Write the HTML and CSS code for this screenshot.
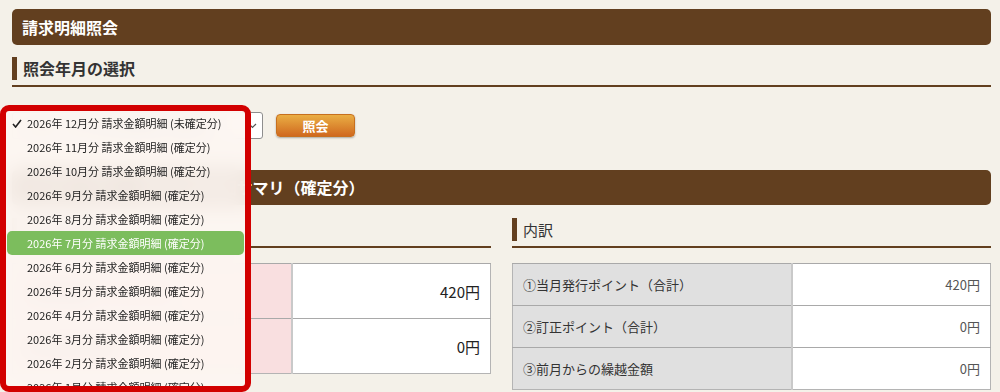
FILE: index.html
```html
<!DOCTYPE html>
<html lang="ja">
<head>
    <meta charset="UTF-8">
    <meta name="viewport" content="width=device-width, initial-scale=1.0">
    <title>請求明細照会</title>
    <link rel="stylesheet" href="styles.css">
</head>
<body>
    <div class="page">
        <h1 class="bar">請求明細照会</h1>

        <h2 class="sub"><span>照会年月の選択</span></h2>

        <div class="picker">
            <div class="select">
                <span class="select-text">2026年 12月分 請求金額明細 (未確定分)</span>
                <svg class="chevron" width="9" height="6" viewBox="0 0 9 6">
                    <polyline points="1,1 4.5,4.5 8,1" fill="none" stroke="#555" stroke-width="1.2"/>
                </svg>
            </div>
            <button class="btn-query">照会</button>
        </div>

        <h1 class="bar bar-summary">2026年 7月分 ご請求金額明細サマリ（確定分）</h1>

        <div class="columns">
            <div class="col">
                <h2 class="sub sub-light"><span>ご請求金額</span></h2>
                <table class="summary">
                    <tr>
                        <th>ご請求金額（①＋②＋③）</th>
                        <td>420円</td>
                    </tr>
                    <tr>
                        <th>お支払済み金額</th>
                        <td>0円</td>
                    </tr>
                </table>
            </div>

            <div class="col">
                <h2 class="sub sub-light"><span>内訳</span></h2>
                <table class="detail">
                    <tr>
                        <th>①当月発行ポイント（合計）</th>
                        <td>420円</td>
                    </tr>
                    <tr>
                        <th>②訂正ポイント（合計）</th>
                        <td>0円</td>
                    </tr>
                    <tr>
                        <th>③前月からの繰越金額</th>
                        <td>0円</td>
                    </tr>
                </table>
            </div>
        </div>
    </div>

    <!-- 年月選択のプルダウン（展開中） -->
    <div class="popup">
        <ul class="options">
            <li>
                <span class="mark"><svg width="10" height="9" viewBox="0 0 10 9"><polyline points="1,5 3.6,8 9,1" fill="none" stroke="#222" stroke-width="1.6"/></svg></span>
                <span class="label">2026年 12月分 請求金額明細 (未確定分)</span>
            </li>
            <li><span class="mark"></span><span class="label">2026年 11月分 請求金額明細 (確定分)</span></li>
            <li><span class="mark"></span><span class="label">2026年 10月分 請求金額明細 (確定分)</span></li>
            <li><span class="mark"></span><span class="label">2026年 9月分 請求金額明細 (確定分)</span></li>
            <li><span class="mark"></span><span class="label">2026年 8月分 請求金額明細 (確定分)</span></li>
            <li class="active"><span class="mark"></span><span class="label">2026年 7月分 請求金額明細 (確定分)</span></li>
            <li><span class="mark"></span><span class="label">2026年 6月分 請求金額明細 (確定分)</span></li>
            <li><span class="mark"></span><span class="label">2026年 5月分 請求金額明細 (確定分)</span></li>
            <li><span class="mark"></span><span class="label">2026年 4月分 請求金額明細 (確定分)</span></li>
            <li><span class="mark"></span><span class="label">2026年 3月分 請求金額明細 (確定分)</span></li>
            <li><span class="mark"></span><span class="label">2026年 2月分 請求金額明細 (確定分)</span></li>
            <li><span class="mark"></span><span class="label">2026年 1月分 請求金額明細 (確定分)</span></li>
        </ul>
    </div>
</body>
</html>
```

FILE: styles.css
```css
body {
    margin: 0;
    background-color: #f4f1e9;
    color: #333;
    font-family: "Noto Sans CJK JP", "Noto Sans", sans-serif;
}

.page {
    padding: 9px 9px 0 12px;
}

/* 茶色の見出しバー */
.bar {
    margin: 0;
    height: 36px;
    padding: 0 10px;
    background-color: #623f1f;
    border-radius: 5px;
    color: #fff;
    font-size: 16px;
    font-weight: bold;
    line-height: 36px;
}

.bar-summary {
    margin-top: 31px;
    height: 35px;
    line-height: 35px;
}

/* 左線付きの小見出し */
.sub {
    margin: 12px 0 0;
    padding-bottom: 5px;
    border-bottom: 2px solid #623f1f;
    font-size: 16px;
    font-weight: bold;
}

.sub span {
    display: block;
    border-left: 5px solid #623f1f;
    padding-left: 6px;
    line-height: 23px;
}

.sub-light {
    margin-top: 13px;
    font-size: 15px;
    font-weight: normal;
}

/* 年月選択 */
.picker {
    display: flex;
    align-items: center;
    margin-top: 25px;
}

.select {
    display: flex;
    align-items: center;
    justify-content: space-between;
    box-sizing: border-box;
    width: 251px;
    height: 27px;
    padding: 0 5px 0 8px;
    background: #fff;
    border: 1px solid #8e8e8e;
    border-radius: 3px;
    font-size: 11px;
    color: #222;
}

.chevron {
    flex: none;
}

.btn-query {
    width: 79px;
    height: 23px;
    margin-left: 13px;
    background: linear-gradient(#eaae44, #d0691f);
    border: 1px solid #c7701f;
    border-radius: 4px;
    box-shadow: 0 1px 2px rgba(0, 0, 0, 0.3);
    color: #fff;
    font-family: inherit;
    font-size: 13px;
    font-weight: bold;
    line-height: 1;
    cursor: pointer;
}

/* サマリ・内訳 */
.columns {
    display: grid;
    grid-template-columns: 1fr 1fr;
    gap: 21px;
}

table {
    width: 100%;
    margin-top: 15px;
    border-collapse: collapse;
    background: #fff;
    border: 1px solid #b4b4b4;
}

th, td {
    border-top: 1px solid #a9a9a9;
    font-weight: normal;
}

th {
    text-align: left;
    border-right: 2px solid #c9c9c9;
}

td {
    text-align: right;
}

.summary th {
    width: 258px;
    height: 54px;
    padding: 0 10px;
    background: #f9dfe0;
    font-size: 13px;
}

.summary td {
    padding: 0 10px;
    font-size: 15px;
    color: #222;
}

.detail th {
    width: 258px;
    height: 41px;
    padding: 0 10px;
    background: #e0e0e0;
    font-size: 13px;
}

.detail td {
    padding: 0 10px;
    font-size: 13px;
    color: #555;
}

/* 展開中のプルダウン（赤枠で強調） */
.popup {
    position: absolute;
    left: 0;
    top: 105px;
    box-sizing: border-box;
    width: 251px;
    height: 287px;
    border: 6px solid #d20000;
    border-radius: 9px;
    overflow: hidden;
    background: rgba(253, 246, 242, 0.9);
    backdrop-filter: blur(10px);
}

.options {
    list-style: none;
    margin: 0;
    padding: 0;
}

.options li {
    display: flex;
    align-items: center;
    height: 24px;
    font-size: 11px;
    color: #222;
    white-space: nowrap;
}

.options .mark {
    display: flex;
    justify-content: center;
    flex: none;
    width: 21px;
}

.options .active {
    margin: 0 1px;
    background: #7cbd5d;
    border-radius: 5px;
    color: #fff;
}

.options .active .mark {
    width: 20px;
}
```
